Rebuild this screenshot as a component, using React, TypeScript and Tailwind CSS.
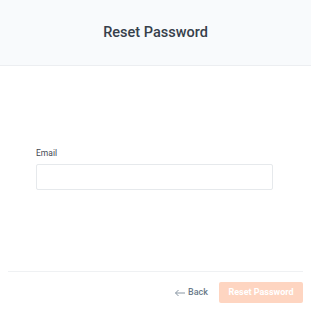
export default function App() {
  return (
    <div className="w-[311px] h-[313px] bg-white flex flex-col" style={{ fontFamily: 'Roboto, "Liberation Sans", sans-serif' }}>
      <div className="h-[66px] bg-[#f8fafc] border-b border-[#eceef1] flex items-center justify-center">
        <h1 className="text-[14.5px] font-medium text-[#36404b]">Reset Password</h1>
      </div>

      <div className="flex-1 px-9 pt-[81px]">
        <label className="block text-[8.5px] font-normal text-[#3f4852] mb-[4px]">Email</label>
        <input type="email" className="w-[237px] h-[26px] border border-[#e6e9ec] rounded-[2px] outline-none" />
      </div>

      <div className="mx-2 border-t border-[#eff1f3] pt-[10px] pb-[10px] flex items-center justify-end gap-[11px]">
        <button className="flex items-center gap-[2px] text-[9px] font-medium text-[#6b7a8a]">
          <svg width="12" height="8" viewBox="0 0 12 8" fill="none" stroke="#8a97a4" strokeWidth="1">
            <path d="M11 4H1.5M4.5 1L1.5 4l3 3" />
          </svg>
          Back
        </button>
        <button className="w-[84px] h-[21px] rounded-[2px] bg-[#fed5c1] text-white text-[9px] font-bold">
          Reset Password
        </button>
      </div>
    </div>
  )
}
